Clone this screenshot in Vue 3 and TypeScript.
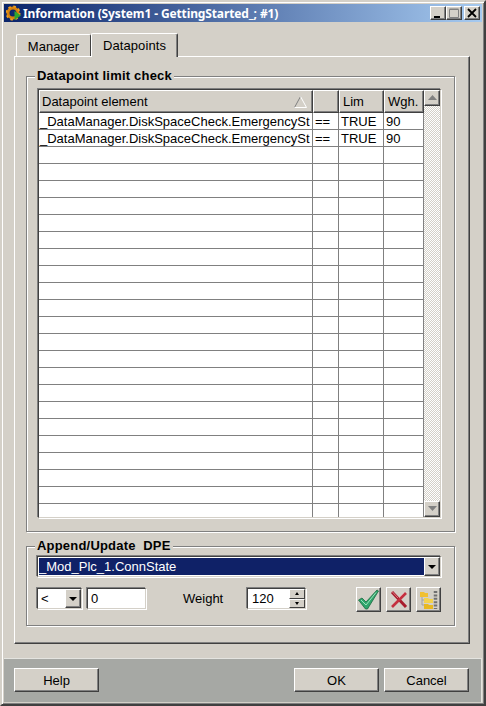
<template>
  <div class="window">
    <div class="titlebar">
      <svg class="app-icon" width="16" height="16" viewBox="0 0 16 16">
        <circle cx="7" cy="8" r="5" fill="none" stroke="#d8820c" stroke-width="3" />
        <circle cx="7" cy="8" r="6.6" fill="none" stroke="#f0a020" stroke-width="1.8" stroke-dasharray="2.6 2.6" />
        <circle cx="7" cy="8" r="2.4" fill="#0f2a70" />
        <path d="M8.5 6L15 10.5L8.5 15Z" fill="#2fa82f" />
      </svg>
      <span class="title-text">Information (System1 - GettingStarted_; #1)</span>
      <div class="caption-buttons">
        <button class="caption-btn">
          <svg width="10" height="10" viewBox="0 0 10 10"><rect x="1" y="8" width="6" height="2" fill="#000" /></svg>
        </button>
        <button class="caption-btn">
          <svg width="10" height="10" viewBox="0 0 10 10"><path d="M0.5 1.5H9.5V9.5H0.5Z M0.5 1H9.5" fill="none" stroke="#808080" /></svg>
        </button>
        <button class="caption-btn close">
          <svg width="10" height="10" viewBox="0 0 10 10"><path d="M1 1L9 9M9 1L1 9" stroke="#000" stroke-width="1.8" /></svg>
        </button>
      </div>
    </div>

    <div class="client">
      <div class="tabs">
        <div class="tab">Manager</div>
        <div class="tab active">Datapoints</div>
      </div>

      <div class="panel">
        <div class="group limit-group">
          <div class="legend">Datapoint limit check</div>
          <div class="table-box">
            <div class="table-main">
              <div class="row header">
                <div class="cell head sorted">
                  Datapoint element
                  <svg class="sort-mark" width="13" height="12" viewBox="0 0 13 12">
                    <path d="M6.5 0.5L0.5 11.5" stroke="#808080" fill="none" />
                    <path d="M6.5 0.5L12.5 11.5H0.5" stroke="#fff" fill="none" />
                  </svg>
                </div>
                <div class="cell head"></div>
                <div class="cell head">Lim</div>
                <div class="cell head">Wgh.</div>
              </div>
              <div class="table-body">
                <div v-for="(row, i) in rows" :key="i" class="row">
                  <div class="cell">{{ row.element }}</div>
                  <div class="cell">{{ row.op }}</div>
                  <div class="cell">{{ row.limit }}</div>
                  <div class="cell">{{ row.weight }}</div>
                </div>
              </div>
            </div>
            <div class="scrollbar">
              <div class="arrow-btn">
                <svg width="9" height="6" viewBox="0 0 9 6"><path d="M4.5 0L9 5H0Z" fill="#808080" /></svg>
              </div>
              <div class="track"></div>
              <div class="arrow-btn">
                <svg width="9" height="6" viewBox="0 0 9 6"><path d="M0 0H9L4.5 5Z" fill="#808080" /></svg>
              </div>
            </div>
          </div>
        </div>

        <div class="group append-group">
          <div class="legend">Append/Update&nbsp; DPE</div>
          <div class="combo wide">
            <div class="combo-value selected"><span>_Mod_Plc_1.ConnState</span></div>
            <div class="arrow-btn"><span class="down-black"></span></div>
          </div>
          <div class="edit-row">
            <div class="combo small">
              <div class="combo-value">&lt;</div>
              <div class="arrow-btn"><span class="down-black"></span></div>
            </div>
            <div class="field value-field">0</div>
            <span class="weight-label">Weight</span>
            <div class="field spin-field">
              <span class="spin-value">120</span>
              <div class="spin-buttons">
                <div class="spin-btn"><span class="mini-up"></span></div>
                <div class="spin-btn"><span class="mini-down"></span></div>
              </div>
            </div>
            <div class="tool-buttons">
              <button class="tool-btn">
                <svg width="21" height="21" viewBox="0 0 21 21">
                  <path d="M0.5 11L4 9L8 13L19 1L20.5 2L9.5 20H7.5Z" fill="#2fa56c" stroke="#1c6b40" stroke-width="0.8" />
                  <path d="M3 11L8 16L18 3.5" fill="none" stroke="#9ae2b8" stroke-width="1" />
                </svg>
              </button>
              <button class="tool-btn">
                <svg width="21" height="21" viewBox="0 0 21 21">
                  <path d="M4 3L18 18" stroke="#a81c2c" stroke-width="3" />
                  <path d="M18 4L4 18" stroke="#c4303f" stroke-width="2.6" />
                  <path d="M4 2.5L10 9M16 4L11 9" stroke="#e8909a" stroke-width="0.8" fill="none" />
                </svg>
              </button>
              <button class="tool-btn">
                <svg width="21" height="21" viewBox="0 0 21 21">
                  <path d="M4 7V16H6M4 11H6" fill="none" stroke="#a0a0a0" />
                  <path d="M2 3H6L7 4H10V8H2Z" fill="#f0c030" />
                  <path d="M6 9H10L11 10H15V14H6Z" fill="#f4d24c" />
                  <path d="M6 15H10L11 16H15V20H6Z" fill="#e8b820" />
                  <path d="M17.5 2V20" stroke="#707070" stroke-width="3.5" stroke-dasharray="2 1.4" />
                </svg>
              </button>
            </div>
          </div>
        </div>
      </div>
    </div>

    <div class="footer">
      <button class="push-btn">Help</button>
      <div class="footer-right">
        <button class="push-btn">OK</button>
        <button class="push-btn">Cancel</button>
      </div>
    </div>
  </div>
</template>

<script setup lang="ts">
interface LimitRow {
  element: string
  op: string
  limit: string
  weight: string
}

const filled: LimitRow = {
  element: '_DataManager.DiskSpaceCheck.EmergencySt',
  op: '==',
  limit: 'TRUE',
  weight: '90',
}
const empty: LimitRow = { element: '', op: '', limit: '', weight: '' }

const rows: LimitRow[] = [filled, filled, ...Array<LimitRow>(22).fill(empty)]
</script>

<style>
html,
body {
  margin: 0;
  background: #d4d0c8;
}
</style>

<style scoped>
.window {
  box-sizing: border-box;
  width: 486px;
  height: 706px;
  padding: 2px;
  background: #d4d0c8;
  border: 2px solid;
  border-color: #d4d0c8 #404040 #404040 #d4d0c8;
  box-shadow: inset 1px 1px 0 #fff, inset -1px -1px 0 #808080;
  display: flex;
  flex-direction: column;
  font-family: "Liberation Sans", Arial, sans-serif;
  font-size: 13px;
  color: #000;
}

.titlebar {
  flex: none;
  height: 18px;
  display: flex;
  align-items: center;
  background: linear-gradient(to right, #0a246a, #a6caf0);
}

.app-icon {
  flex: none;
  margin-left: 2px;
}

.title-text {
  margin-left: 1px;
  font-family: "Noto Sans", sans-serif;
  font-size: 12px;
  font-weight: bold;
  letter-spacing: -0.12px;
  color: #fff;
  white-space: nowrap;
}

.caption-buttons {
  margin-left: auto;
  margin-right: 2px;
  display: flex;
}

.caption-btn,
.tool-btn,
.push-btn {
  padding: 0;
  background: #d4d0c8;
  border: 1px solid;
  border-color: #fff #404040 #404040 #fff;
  box-shadow: inset -1px -1px 0 #808080;
  color: #000;
  font: inherit;
  display: flex;
  align-items: center;
  justify-content: center;
  box-sizing: border-box;
}

.caption-btn {
  width: 16px;
  height: 14px;
}

.caption-btn.close {
  margin-left: 2px;
}

.client {
  flex: none;
  padding: 11px 12px 0 10px;
}

.tabs {
  height: 24px;
  padding-left: 2px;
  display: flex;
  align-items: flex-end;
  position: relative;
  z-index: 1;
}

.tab {
  box-sizing: border-box;
  width: 75px;
  height: 22px;
  margin-bottom: 1px;
  padding-top: 4px;
  text-align: center;
  background: #d4d0c8;
  border: 1px solid #fff;
  border-right: 1px solid #404040;
  border-bottom: none;
  border-radius: 2px 2px 0 0;
}

.tab.active {
  width: 87px;
  height: 24px;
  margin-bottom: 0;
  box-shadow: inset -1px 0 0 #808080;
  letter-spacing: 0.1px;
}

.panel {
  box-sizing: border-box;
  height: 588px;
  margin-top: -1px;
  padding: 19px 14px 0 11px;
  border: 1px solid;
  border-color: #fff #404040 #404040 #fff;
  box-shadow: inset -1px -1px 0 #808080;
}

.group {
  box-sizing: border-box;
  width: 429px;
  border: 1px solid #808080;
  box-shadow: inset 1px 1px 0 #fff, 1px 1px 0 #fff;
}

.limit-group {
  height: 456px;
  padding-left: 10px;
}

.append-group {
  height: 80px;
  margin-top: 14px;
  padding-left: 9px;
}

.legend {
  width: fit-content;
  height: 14px;
  margin: -8px 0 0 -2px;
  padding: 0 2px;
  background: #d4d0c8;
  font-size: 13px;
  line-height: 14px;
  font-weight: bold;
  letter-spacing: 0.2px;
  white-space: nowrap;
}

.append-group .legend {
  margin-left: -1px;
}

.table-box {
  box-sizing: border-box;
  width: 403px;
  height: 429px;
  margin: 6px 0 0 1px;
  display: flex;
  border: 1px solid;
  border-color: #404040 #d4d0c8 #d4d0c8 #404040;
  box-shadow: -1px -1px 0 #808080, 1px 1px 0 #fff;
  background: #fff;
}

.table-main {
  width: 385px;
  display: flex;
  flex-direction: column;
  min-height: 0;
}

.table-body {
  flex: 1;
  min-height: 0;
  overflow: hidden;
}

.row {
  height: 17px;
  display: grid;
  grid-template-columns: 274px 26px 45px 40px;
}

.row.header {
  flex: none;
  height: 23px;
}

.cell {
  box-sizing: border-box;
  padding-left: 2px;
  border-right: 1px solid #808080;
  border-bottom: 1px solid #808080;
  line-height: 17px;
  white-space: nowrap;
  overflow: hidden;
}

.cell:first-child {
  padding-left: 1px;
}

.cell.head {
  padding-left: 3px;
  background: #d4d0c8;
  border: 1px solid;
  border-color: #fff #404040 #404040 #fff;
  box-shadow: inset -1px -1px 0 #808080;
  line-height: 21px;
}

.cell.sorted {
  display: flex;
  align-items: center;
  justify-content: space-between;
  padding-left: 2px;
  padding-right: 5px;
}

.scrollbar {
  width: 16px;
  display: flex;
  flex-direction: column;
}

.arrow-btn {
  box-sizing: border-box;
  flex: none;
  width: 16px;
  height: 16px;
  background: #d4d0c8;
  border: 1px solid;
  border-color: #fff #404040 #404040 #fff;
  box-shadow: inset -1px -1px 0 #808080;
  display: flex;
  align-items: center;
  justify-content: center;
}

.track {
  flex: 1;
  background: repeating-conic-gradient(#d4d0c8 0 25%, #fff 0 50%) 0 0 / 2px 2px;
}

.combo,
.field {
  box-sizing: border-box;
  height: 21px;
  margin: 1px 0 1px 1px;
  background: #fff;
  border: 1px solid;
  border-color: #404040 #d4d0c8 #d4d0c8 #404040;
  box-shadow: -1px -1px 0 #808080, 1px 1px 0 #fff;
}

.combo {
  display: flex;
  align-items: stretch;
}

.combo.wide {
  width: 404px;
  margin-top: 3px;
}

.combo.small {
  width: 45px;
}

.combo-value {
  flex: 1;
  min-width: 0;
  padding-left: 3px;
  line-height: 19px;
}

.combo-value.selected {
  margin: 1px 0 1px 1px;
  padding-left: 0;
  background: #0f2167;
  color: #fff;
  line-height: 17px;
}

.combo .arrow-btn {
  height: auto;
}

.down-black {
  width: 0;
  height: 0;
  border-left: 4px solid transparent;
  border-right: 4px solid transparent;
  border-top: 4px solid #000;
}

.edit-row {
  margin-top: 10px;
  display: flex;
  align-items: flex-start;
}

.field {
  line-height: 19px;
  padding-left: 3px;
}

.value-field {
  width: 59px;
  margin-left: 5px;
}

.weight-label {
  margin-left: 37px;
  width: 64px;
  line-height: 24px;
}

.spin-field {
  width: 59px;
  margin-left: 0;
  display: flex;
  padding-left: 4px;
}

.spin-value {
  flex: 1;
}

.spin-buttons {
  width: 16px;
  display: flex;
  flex-direction: column;
}

.spin-btn {
  box-sizing: border-box;
  flex: 1;
  background: #d4d0c8;
  border: 1px solid;
  border-color: #fff #404040 #404040 #fff;
  display: flex;
  align-items: center;
  justify-content: center;
}

.mini-up,
.mini-down {
  width: 0;
  height: 0;
  border-left: 2.5px solid transparent;
  border-right: 2.5px solid transparent;
}

.mini-up {
  border-bottom: 3px solid #000;
}

.mini-down {
  border-top: 3px solid #000;
}

.tool-buttons {
  margin-left: 50px;
  display: flex;
  gap: 5px;
}

.tool-btn {
  width: 25px;
  height: 25px;
}

.footer {
  flex: none;
  box-sizing: border-box;
  height: 45px;
  margin-top: 14px;
  padding: 9px 12px 0 10px;
  background: #a6a8a4;
  border-top: 1px solid #e4e4e0;
  border-right: 1px solid #e4e4e0;
  border-bottom: 1px solid #d4d0c8;
  display: flex;
  justify-content: space-between;
}

.footer-right {
  display: flex;
  gap: 5px;
}

.push-btn {
  width: 85px;
  height: 24px;
}
</style>
